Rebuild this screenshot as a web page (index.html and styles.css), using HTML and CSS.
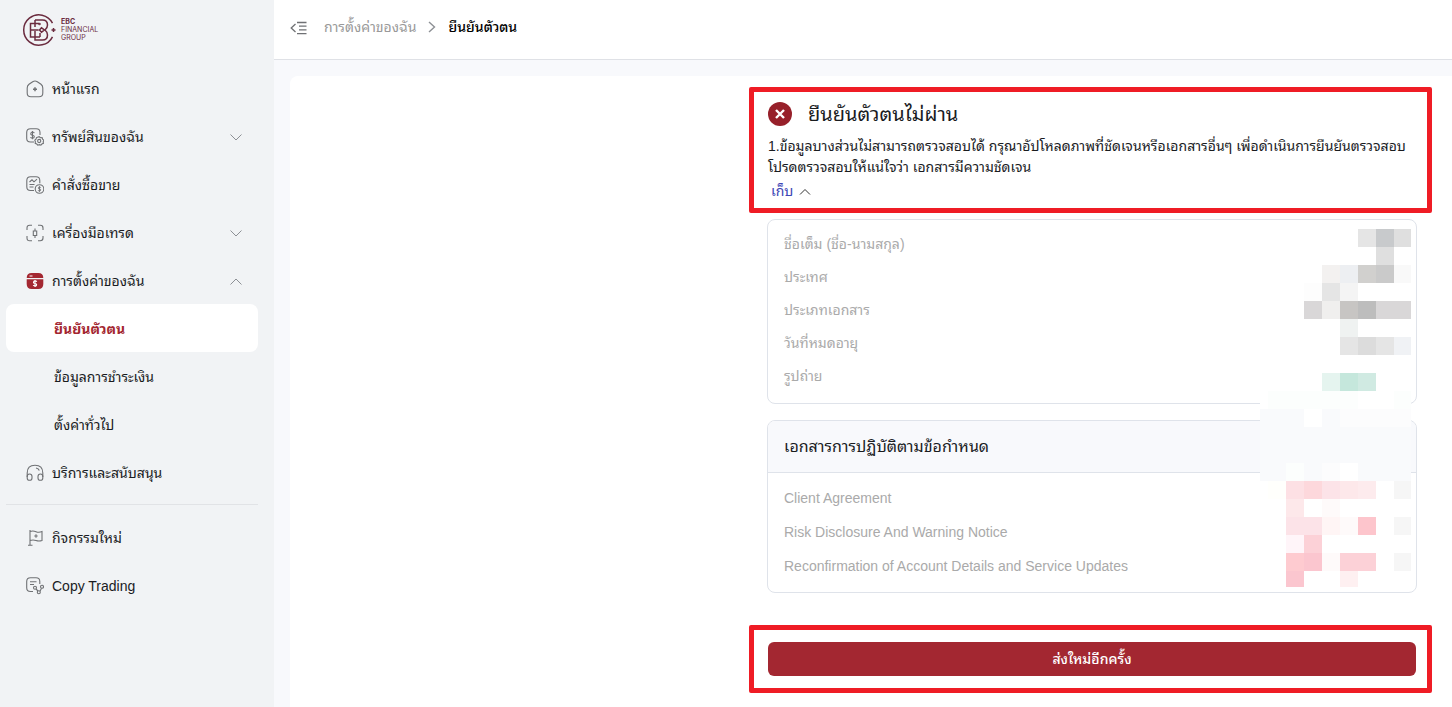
FILE: index.html
```html
<!DOCTYPE html>
<html lang="th">
<head>
<meta charset="utf-8">
<meta name="viewport" content="width=device-width, initial-scale=1">
<title>ยืนยันตัวตน</title>
<link rel="stylesheet" href="styles.css">
</head>
<body>
<div class="app">
  <aside class="sidebar">
    <a class="logo" href="#" aria-label="EBC Financial Group">
      <svg class="logo-mark" viewBox="0 0 34 34" fill="none" stroke="#6b2c3f" stroke-width="1.5">
        <path d="M30.500 10.200A15.200 15.200 0 1 0 30.500 23.800"/>
        <path d="M13 7h7.500q5 0 5 5 0 3-2.500 5 2.500 2 2.500 5 0 5-5 5H13v-9M13 7v7M13 10.500H8.500v13.500h9.500M8.500 17h8M17 10.500h-4M18 24v-4M22.500 17l-3 2.200-2-2.200 2-2.200z"/>
        <path d="M31.500 15v4M29.500 17h4" stroke-width="1.500"/>
        <circle cx="17.500" cy="11" r=".5"/>
      </svg>
      <span class="logo-text"><b>EBC</b><span>FINANCIAL</span><span>GROUP</span></span>
    </a>
    <nav class="menu">
      <a class="item" href="#">
        <svg class="icon" viewBox="0 0 18 18"><path d="M6.700 1.700 3 4.300Q1.200 5.700 1.200 8v5q0 3.800 3.800 3.800h8q3.800 0 3.800-3.800V8q0-2.300-1.800-3.700l-3.700-2.600Q9 .2 6.700 1.700z"/><path d="M9 7.200v4M7 9.200h4" stroke-width="1.500"/></svg>
        <span>หน้าแรก</span>
      </a>
      <button class="item" type="button">
        <svg class="icon" viewBox="0 0 18 18"><path d="M8 14H4.500Q.7 14 .7 10.200V4.500Q.7.700 4.500.7h5.700Q14 .7 14 4.500V7"/><path d="M8.300 5.200Q8 4 6.500 4T4.800 5.500 6.500 7.200 8.300 8.800 6.500 10.300 4.700 9M6.500 3v8.300"/><path d="m13.200 8.700 1.300 1 1.600-.1.500 1.500 1.200 1.100-.6 1.500.2 1.600-1.500.6-1 1.300-1.600-.5-1.600.5-1-1.300-1.500-.6.200-1.600-.6-1.500 1.200-1.100.5-1.500z"/><circle cx="13.200" cy="13" r="1.600"/></svg>
        <span>ทรัพย์สินของฉัน</span>
        <svg class="chev" viewBox="0 0 12 7"><path d="m.5.500 5.500 5.500L11.500.5"/></svg>
      </button>
      <a class="item" href="#">
        <svg class="icon" viewBox="0 0 18 18"><path d="M8 14.500H4.500Q.8 14.500.8 10.700V4.500Q.8.700 4.600.7H10q3.800 0 3.800 3.800v2.700M3.500 6 6 3.800l2 2 3-2.700M3.500 8.500h5M3.500 11h4"/><circle cx="13.500" cy="13" r="4.300"/><path d="M14.800 11.800q-.3-.8-1.300-.8t-1.200.9 1.200 1.100 1.300 1-1.300 1-1.300-.8M13.500 10.200v5.600" stroke-width=".9"/></svg>
        <span>คำสั่งซื้อขาย</span>
      </a>
      <button class="item" type="button">
        <svg class="icon" viewBox="0 0 18 18"><path d="M1 6V4q0-2.700 2.700-2.700H6M12 1.300h2.300Q17 1.300 17 4v2M17 12v2q0 2.700-2.700 2.700H12M6 16.700H3.700Q1 16.700 1 14v-2M7.300 7h3.400v4.500H7.300zM9 4.500V7M9 11.500V14"/></svg>
        <span>เครื่องมือเทรด</span>
        <svg class="chev" viewBox="0 0 12 7"><path d="m.5.500 5.500 5.500L11.500.5"/></svg>
      </button>
      <button class="item" type="button" aria-expanded="true">
        <svg class="icon icon-solid" viewBox="0 0 18 18"><path class="fill" d="M.7 6q0-5 5-5h6.600q5 0 5 5zM.7 7.300h16.600V12q0 5-5 5H5.700q-5 0-5-5z"/><path class="cut" d="M3.500 4h3M10.700 9.800q-.3-.9-1.700-.9t-1.500 1.300T9 11.500t1.600 1.300T9 14t-1.700-1M9 8v7"/></svg>
        <span>การตั้งค่าของฉัน</span>
        <svg class="chev" viewBox="0 0 12 7"><path d="M.5 6.500 6 1l5.500 5.500"/></svg>
      </button>
      <a class="item sub active" href="#" aria-current="page">ยืนยันตัวตน</a>
      <a class="item sub" href="#">ข้อมูลการชำระเงิน</a>
      <a class="item sub" href="#">ตั้งค่าทั่วไป</a>
      <a class="item" href="#">
        <svg class="icon" viewBox="0 0 18 18"><path d="M1.200 13V9Q1.200 1.300 9 1.300T16.800 9v4M10 4q2.700.4 3.300 2.500"/><rect x="1.200" y="10" width="4.800" height="6.300" rx="2.400"/><rect x="12" y="10" width="4.800" height="6.300" rx="2.400"/></svg>
        <span>บริการและสนับสนุน</span>
      </a>
      <hr class="divider">
      <a class="item" href="#">
        <svg class="icon" viewBox="0 0 18 18"><path d="M4 1v15.500M2 16.300h4.500M4 2.500q3-1 6 .2t6-.2v9q-3 1-6 0t-6 0M10 5.300v3.400M8.300 7h3.400"/></svg>
        <span>กิจกรรมใหม่</span>
      </a>
      <a class="item" href="#">
        <svg class="icon" viewBox="0 0 18 18"><path d="M7 14.500H4.500Q.7 14.500.7 10.700V4.500Q.7.700 4.500.7H10q3.800 0 3.800 3.800V7M4 4.700h6.500M4 7.500h4"/><circle cx="9" cy="10.800" r="1.500"/><circle cx="16" cy="9.800" r="1.500"/><circle cx="12.800" cy="15.300" r="1.500"/><path d="m10 12 2 2M14 14.200l1.500-3"/></svg>
        <span>Copy Trading</span>
      </a>
    </nav>
  </aside>

  <div class="main">
    <header class="topbar">
      <button class="collapse" type="button" aria-label="เมนู">
        <svg viewBox="0 0 18 14"><path d="M5.500 3 1.200 7l4.300 4M7 1.500h9.500M9 5.200h7.500M9 8.900h7.500M7 12.600h9.500"/></svg>
      </button>
      <nav class="crumbs">
        <a href="#">การตั้งค่าของฉัน</a>
        <svg viewBox="0 0 8 12"><path d="m1 1 5.500 5L1 11"/></svg>
        <span>ยืนยันตัวตน</span>
      </nav>
    </header>

    <main class="page">
      <div class="column">
        <section class="frame notice">
          <h1>
            <svg viewBox="0 0 24 24"><circle cx="12" cy="12" r="12"/><path d="m8 8 8 8M16 8l-8 8"/></svg>
            <span>ยืนยันตัวตนไม่ผ่าน</span>
          </h1>
          <p>1.ข้อมูลบางส่วนไม่สามารถตรวจสอบได้ กรุณาอัปโหลดภาพที่ชัดเจนหรือเอกสารอื่นๆ เพื่อดำเนินการยืนยันตรวจสอบ<br>โปรดตรวจสอบให้แน่ใจว่า เอกสารมีความชัดเจน</p>
          <button class="fold" type="button">เก็บ <svg viewBox="0 0 12 7"><path d="M1 6.500 6 1.500l5 5"/></svg></button>
        </section>

        <div class="cards">
          <section class="card">
            <ul class="fields">
              <li>ชื่อเต็ม (ชื่อ-นามสกุล)</li>
              <li>ประเทศ</li>
              <li>ประเภทเอกสาร</li>
              <li>วันที่หมดอายุ</li>
              <li>รูปถ่าย</li>
            </ul>
          </section>
          <section class="card">
            <h2>เอกสารการปฏิบัติตามข้อกำหนด</h2>
            <ul class="fields docs">
              <li>Client Agreement</li>
              <li>Risk Disclosure And Warning Notice</li>
              <li>Reconfirmation of Account Details and Service Updates</li>
            </ul>
          </section>
          <svg class="mosaic" viewBox="0 0 151 358" shape-rendering="crispEdges" aria-hidden="true">
            <path fill="#fff" d="M0 162h151v36H0zM0 252h151v106H0z"/>
            <path fill="#f9fafc" d="M0 198h151v54H0z"/>
            <path fill="#e5e5e5" d="M98 0h18v18H98zM62 54h18v18H62zM80 108h18v18H80zM116 108h18v18h-18z"/>
            <path fill="#c8cacc" d="M116 0h18v18h-18z"/>
            <path fill="#dfdfdf" d="M134 0h17v18h-17zM116 18h18v18h-18z"/>
            <path fill="#f3f1f0" d="M62 36h18v18H62z"/>
            <path fill="#edeff2" d="M80 36h18v18H80z"/>
            <path fill="#d1d0ce" d="M98 36h18v18H98z"/>
            <path fill="#cacaca" d="M116 36h18v18h-18z"/>
            <path fill="#f9f9f9" d="M134 36h17v18h-17z"/>
            <path fill="#fdfdfd" d="M44 54h18v18H44z"/>
            <path fill="#f4f4f4" d="M80 54h18v18H80z"/>
            <path fill="#d9d7d8" d="M44 72h18v18H44zM116 72h35v18h-35z"/>
            <path fill="#f0efee" d="M62 72h18v18H62z"/>
            <path fill="#c7c5c3" d="M80 72h18v18H80z"/>
            <path fill="#bdbdbd" d="M98 72h18v18H98z"/>
            <path fill="#eff2f1" d="M80 90h18v18H80z"/>
            <path fill="#dcdcdc" d="M98 108h18v18H98z"/>
            <path fill="#f0f2f5" d="M134 108h17v18h-17z"/>
            <path fill="#e5f4ef" d="M62 144h18v18H62z"/>
            <path fill="#c5e7dc" d="M80 144h18v18H80z"/>
            <path fill="#d0eae2" d="M98 144h18v18H98z"/>
            <path fill="#fcfefd" d="M8 162h90v18H8zM134 162h17v18h-17z"/>
            <path fill="#f9fafc" d="M0 180h44v18H0zM62 180h18v18H62z"/>
            <path fill="#fcfcfd" d="M80 180h71v18H80zM62 234h18v18H62z"/>
            <path fill="#fcfefd" d="M26 234h18v18H26z"/>
            <path fill="#fff" d="M80 234h18v18H80z"/>
            <path fill="#fffffc" d="M8 252h18v18H8z"/>
            <path fill="#fde0e4" d="M26 252h18v18H26z"/>
            <path fill="#fdd8dc" d="M44 252h18v18H44z"/>
            <path fill="#fce3e8" d="M62 252h18v18H62zM26 288h36v18H26z"/>
            <path fill="#fde8ea" d="M80 252h18v18H80zM26 270h18v18H26z"/>
            <path fill="#fdebed" d="M98 252h18v18H98z"/>
            <path fill="#f6f6f6" d="M134 252h17v18h-17zM134 288h17v18h-17zM134 324h17v18h-17z"/>
            <path fill="#fefafa" d="M62 270h18v18H62zM80 288h18v18H80zM62 324h18v18H62z"/>
            <path fill="#fff5f5" d="M62 288h18v18H62z"/>
            <path fill="#fff5f9" d="M26 306h18v18H26z"/>
            <path fill="#fdc5cc" d="M98 288h18v18H98z"/>
            <path fill="#fcd1d7" d="M44 306h18v18H44zM80 324h36v18H80z"/>
            <path fill="#fecbd0" d="M26 324h18v18H26z"/>
            <path fill="#fbc6cf" d="M44 324h18v18H44zM26 342h18v16H26z"/>
            <path fill="#fef0f1" d="M80 342h18v16H80z"/>
          </svg>
        </div>

        <section class="frame action">
          <button class="submit" type="button">ส่งใหม่อีกครั้ง</button>
        </section>
      </div>
    </main>
  </div>
</div>
</body>
</html>
```
FILE: styles.css
```css
* { box-sizing: border-box; }

body {
  margin: 0;
  font: 14px/22px "Liberation Sans", Tahoma, "Noto Sans Thai Looped", Loma, Waree, Garuda, sans-serif;
  color: #1a1c1f;
  background: #f8f9fc;
}

a { color: inherit; text-decoration: none; }
button { font: inherit; color: inherit; background: none; border: 0; padding: 0; text-align: left; cursor: pointer; }
svg { flex: none; fill: none; }

.app { display: flex; min-height: 100vh; }

/* Sidebar */
.sidebar { flex: none; width: 274px; padding: 0 16px 0 6px; background: #f1f3f5; }
.logo { display: flex; align-items: center; gap: 5px; height: 64px; padding: 0 16px 4px; color: #6b2c3f; }
.logo-mark { width: 34px; height: 34px; }
.logo-text { display: flex; flex-direction: column; font: 7px/8px Inter, sans-serif; }

.menu { display: flex; flex-direction: column; }
.item { display: flex; align-items: center; gap: 8px; height: 48px; padding: 2px 16px 0 20px; border-radius: 8px; white-space: nowrap; }
.icon { width: 18px; height: 18px; stroke: #6f7174; stroke-width: 1.1; }
.icon-solid { stroke: none; }
.icon-solid .fill { fill: #a32731; }
.icon-solid .cut { stroke: #fff; stroke-width: 1.1; }
.chev { width: 12px; height: 7px; margin-left: auto; stroke: #8d9095; }
.sub { padding-left: 48px; }
.active { background: #fff; color: #a32731; font-weight: bold; }
.divider { width: 100%; height: 1px; margin: 8px 0; border: 0; background: #e1e3e6; }

/* Header */
.main { flex: 1; min-width: 0; display: flex; flex-direction: column; }
.topbar { display: flex; align-items: center; gap: 16px; height: 60px; padding: 0 16px 4px; background: #fff; border-bottom: 1px solid #dfe1e6; }
.collapse { display: flex; }
.collapse svg { width: 18px; height: 14px; stroke: #6f7174; stroke-width: 1.3; }
.crumbs { display: flex; align-items: center; gap: 12px; padding-bottom: 2px; color: #999; }
.crumbs svg { width: 8px; height: 12px; stroke: #8d9095; stroke-width: 1.4; }
.crumbs span { color: #000; font-weight: 500; }

/* Content */
.page { flex: 1; display: flex; justify-content: flex-end; margin: 16px 0 0 16px; padding: 11px 20px 14px; background: #fff; border-radius: 8px 0 0 0; }
.column { width: 100%; max-width: 683px; }
.frame { border: 5px solid #ef1c25; border-radius: 2px; }
.action { padding: 12px 11px 12px 14px; }
.notice { padding: 9px 0 6px 14px; }
.notice h1 { display: flex; align-items: center; gap: 16px; margin: 0 0 9px; font-size: 20px; line-height: 26px; font-weight: normal; }
.notice h1 svg { width: 24px; height: 24px; fill: #97202a; stroke: #fff; stroke-width: 0; }
.notice h1 path { stroke-width: 2.4; }
.notice p { margin: 0; line-height: 21px; white-space: nowrap; }
.fold { display: flex; align-items: center; gap: 6px; margin: 2px 0 0 3px; color: #3d45b5; }
.fold svg { width: 12px; height: 7px; stroke: #333; }

.cards { position: relative; display: flex; flex-direction: column; gap: 16px; margin: 6px 15px 32px 18px; }
.card { border: 1px solid #dfe3ea; border-radius: 8px; overflow: hidden; }
.card h2 { margin: 0; padding: 15px 16px 14px; font-size: 16px; line-height: 22px; font-weight: normal; background: #f8f9fc; border-bottom: 1px solid #dfe3ea; }
.fields { display: grid; gap: 12px; margin: 0; padding: 14px 16px 16px; line-height: 21px; list-style: none; color: #aaa; }
.docs { padding: 14px 16px 15px; line-height: 22px; }
.mosaic { position: absolute; right: 6px; top: 10px; width: 151px; height: 358px; }

.submit { display: block; width: 100%; height: 34px; border-radius: 6px; background: #a32731; color: #fff; font-weight: 500; text-align: center; }
```
